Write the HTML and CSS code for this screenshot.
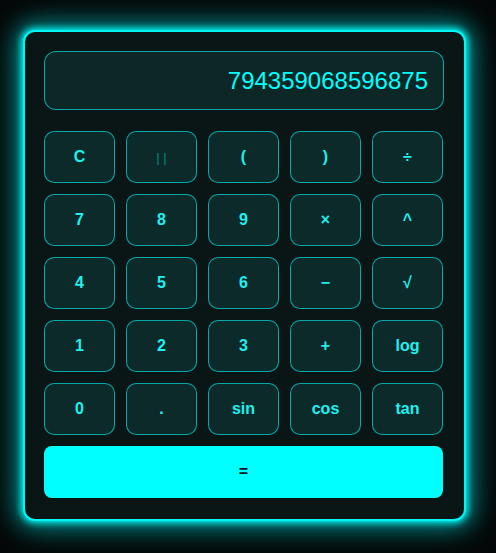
FILE: index.html
```html
<!DOCTYPE html>
<html>
<head>
<meta charset="utf-8">
<link rel="stylesheet" href="styles.css">
</head>
<body>
<div class="calc">
  <div class="display">794359068596875</div>
  <div class="keys">
    <button class="key">C</button>
    <button class="key dim">| |</button>
    <button class="key">(</button>
    <button class="key">)</button>
    <button class="key">÷</button>
    <button class="key">7</button>
    <button class="key">8</button>
    <button class="key">9</button>
    <button class="key">×</button>
    <button class="key">^</button>
    <button class="key">4</button>
    <button class="key">5</button>
    <button class="key">6</button>
    <button class="key">−</button>
    <button class="key">√</button>
    <button class="key">1</button>
    <button class="key">2</button>
    <button class="key">3</button>
    <button class="key">+</button>
    <button class="key">log</button>
    <button class="key">0</button>
    <button class="key">.</button>
    <button class="key">sin</button>
    <button class="key">cos</button>
    <button class="key">tan</button>
    <button class="key equals">=</button>
  </div>
</div>
</body>
</html>
```
FILE: styles.css
```css
html, body {
  margin: 0;
  padding: 0;
  background: #050707;
  height: 100%;
}
body {
  font-family: "Liberation Sans", Arial, sans-serif;
  padding: 30px 0 0 23px;
  box-sizing: border-box;
}
.calc {
  width: 443px;
  box-sizing: border-box;
  border: 2px solid #00f5f5;
  border-radius: 12px;
  background: #0a1515;
  padding: 19px 20px 21px 19px;
  box-shadow: 0 0 6px 2px rgba(0, 255, 255, 0.9), 0 0 22px 6px rgba(0, 230, 230, 0.55), 0 0 40px 10px rgba(0, 160, 160, 0.25);
}
.display {
  height: 59px;
  box-sizing: border-box;
  border: 1px solid rgba(0, 255, 255, 0.6);
  border-radius: 12px;
  background: #0d2626;
  color: #00ffff;
  font-size: 24px;
  display: flex;
  align-items: center;
  justify-content: flex-end;
  padding: 0 15px 0 15px;
  margin-bottom: 21px;
}
.keys {
  display: grid;
  grid-template-columns: repeat(5, 71px);
  grid-auto-rows: 52px;
  column-gap: 11px;
  row-gap: 11px;
}
.key {
  box-sizing: border-box;
  border: 1px solid rgba(0, 255, 255, 0.6);
  border-radius: 10px;
  background: #0d2a2a;
  color: #1ff0f0;
  font-family: "Liberation Sans", Arial, sans-serif;
  font-weight: bold;
  font-size: 16px;
  padding: 0;
}
.key.dim {
  color: rgba(0, 255, 255, 0.45);
  font-weight: normal;
  font-size: 13px;
}
.key.equals {
  grid-column: 1 / -1;
  background: #00ffff;
  border: none;
  color: #0a1515;
  border-radius: 8px;
}
```
